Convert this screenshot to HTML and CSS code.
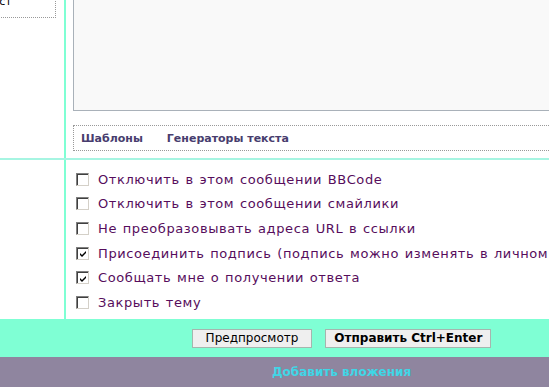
FILE: index.html
```html
<!DOCTYPE html>
<html lang="ru">
<head>
    <meta charset="UTF-8">
    <title>Ответ</title>
    <link rel="stylesheet" href="styles.css">
</head>
<body>
    <div class="page">
        <div class="section editor">
            <div class="side">
                <div class="side-box">Текст</div>
            </div>
            <div class="main">
                <div class="message"></div>
                <div class="tools">
                    <a href="#">Шаблоны</a>
                    <a href="#">Генераторы текста</a>
                </div>
            </div>
        </div>
        <div class="section options">
            <div class="side"></div>
            <div class="main">
                <label class="opt"><span class="box"></span>Отключить в этом сообщении BBCode</label>
                <label class="opt"><span class="box"></span>Отключить в этом сообщении смайлики</label>
                <label class="opt"><span class="box"></span>Не преобразовывать адреса URL в ссылки</label>
                <label class="opt"><span class="box"><svg width="9" height="9" viewBox="0 0 9 9"><path d="M1 4 L3 6 L7 2 L7 4 L3 8 L1 6 Z" fill="#000"/></svg></span>Присоединить подпись (подпись можно изменять в личном разделе)</label>
                <label class="opt"><span class="box"><svg width="9" height="9" viewBox="0 0 9 9"><path d="M1 4 L3 6 L7 2 L7 4 L3 8 L1 6 Z" fill="#000"/></svg></span>Сообщать мне о получении ответа</label>
                <label class="opt"><span class="box"></span>Закрыть тему</label>
            </div>
        </div>
        <div class="buttons">
            <button class="btn">Предпросмотр</button>
            <button class="btn main-btn">Отправить Ctrl+Enter</button>
        </div>
        <div class="footer">
            <a href="#">Добавить вложения</a>
        </div>
    </div>
</body>
</html>
```

FILE: styles.css
```css
html, body {
    margin: 0;
    padding: 0;
    overflow: hidden;
    background-color: #fff;
}
body {
    font-family: "DejaVu Sans", Verdana, sans-serif;
}
.page {
    width: 683px;
}
.section {
    display: flex;
}
.side {
    width: 64px;
    flex-shrink: 0;
    border-right: 2px solid #7fffd4;
}
.main {
    flex: 1;
}
.editor {
    height: 158px;
    border-bottom: 2px solid #a6f5e2;
}
.side-box {
    margin-top: -30px;
    margin-left: -40px;
    width: 96px;
    height: 48px;
    border: 1px dotted #999;
    font-size: 11px;
    line-height: 14px;
    padding: 24px 0 0 18px;
    box-sizing: border-box;
    overflow: hidden;
    white-space: nowrap;
    color: #000;
}
.editor .main {
    padding-left: 7px;
}
.message {
    height: 110px;
    background-color: #f9f9f9;
    border: 1px solid #a9b1b9;
    border-top: none;
}
.tools {
    margin-top: 14px;
    height: 26px;
    border: 1px dotted #999;
    box-sizing: border-box;
    padding-left: 7px;
    display: flex;
    align-items: center;
    gap: 24px;
}
.tools a {
    font-size: 11px;
    font-weight: bold;
    color: #483d6e;
    text-decoration: none;
}
.options {
    height: 159px;
}
.options .main {
    padding: 7px 0 0 10px;
}
.opt {
    display: flex;
    align-items: center;
    height: 24.6px;
    font-size: 13px;
    letter-spacing: 0.6px;
    word-spacing: 1px;
    color: #560d5c;
    white-space: nowrap;
}
.box {
    width: 13px;
    height: 13px;
    box-sizing: border-box;
    margin-right: 9px;
    flex-shrink: 0;
    background-color: #fff;
    border-style: solid;
    border-width: 1px;
    border-color: #808080 #d4d0c8 #d4d0c8 #808080;
    box-shadow: inset 1px 1px 0 #404040;
    display: flex;
    align-items: center;
    justify-content: center;
}
.box svg {
    margin: 1px 0 0 1px;
}
.buttons {
    height: 38px;
    background-color: #7fffd4;
    display: flex;
    justify-content: center;
    align-items: center;
    gap: 13px;
}
.btn {
    font-family: "DejaVu Sans", Verdana, sans-serif;
    font-size: 12px;
    height: 19px;
    padding: 0 13px;
    background-color: #efefef;
    border: 1px solid #a6b5ae;
    color: #000;
}
.main-btn {
    font-weight: bold;
    padding: 0 8px;
}
.footer {
    height: 30px;
    background-color: #8f859f;
    display: flex;
    justify-content: center;
    align-items: center;
}
.footer a {
    font-size: 12px;
    font-weight: bold;
    color: #3fd6e6;
    text-decoration: none;
}
```
